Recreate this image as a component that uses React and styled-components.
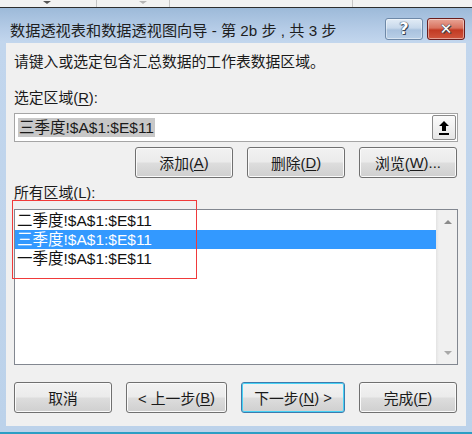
import React from 'react'
import styled, { createGlobalStyle } from 'styled-components'

const Global = createGlobalStyle`
  html, body {
    margin: 0;
    padding: 0;
    background: #f2f2f2;
  }
  body {
    width: 472px;
    height: 434px;
    overflow: hidden;
    font-family: "Liberation Sans", "Noto Sans CJK SC", sans-serif;
    color: #1a1a1a;
  }
`

const Sheet = styled.div`
  height: 7px;
  background: #f2f2f2;
  border-bottom: 1px solid #2e2e2e;
  position: relative;
  .grid {
    position: absolute;
    top: 0;
    width: 1px;
    height: 7px;
    background: #c6c6c6;
  }
  .tri {
    position: absolute;
    top: 1px;
    width: 0;
    height: 0;
    border-left: 4px solid transparent;
    border-right: 4px solid transparent;
    border-top: 3px solid #555;
  }
`

const Window = styled.div`
  height: 426px;
  background: linear-gradient(#9dbad9 0px, #b4cbe6 20px, #c2d6ed 34px, #bcd2ea 100%);
  display: flex;
  flex-direction: column;
  padding: 0 6px 0 6px;
  border-bottom: 2px solid #2c9ec4;
  box-sizing: border-box;
`

const TitleBar = styled.div`
  height: 35px;
  display: flex;
  align-items: center;
  padding: 0 1px 0 4px;
  box-sizing: border-box;
  h1 {
    flex: 1;
    margin: 0;
    font-weight: normal;
    font-size: 15.2px;
    line-height: 20px;
    margin-top: 10px;
    color: #1e1e1e;
  }
`

const Caption = styled.div`
  width: 38px;
  height: 22px;
  margin-top: 6px;
  margin-left: ${p => p.$gap || 0}px;
  box-sizing: border-box;
  border: 1px solid ${p => (p.$close ? '#6b1d1d' : '#6e89a8')};
  border-radius: 3px;
  background: ${p =>
    p.$close
      ? 'linear-gradient(#e8a597 0%, #d9725e 45%, #c23a23 55%, #d0563e 100%)'
      : 'linear-gradient(#e2ecf6 0%, #c7d8eb 45%, #a9c2de 55%, #b9cfe7 100%)'};
  box-shadow: inset 0 0 0 1px rgba(255, 255, 255, 0.45);
  display: flex;
  align-items: center;
  justify-content: center;
  color: #fff;
  font-family: "DejaVu Sans", sans-serif;
  font-weight: bold;
  font-size: ${p => (p.$close ? 15 : 16)}px;
  text-shadow: 0 0 1px #2a3446, 0 0 1px #2a3446, 1px 1px 0 #3b4658;
`

const Client = styled.div`
  flex: 1;
  background: #f0f0f0;
  padding: 9px 8px 12px 8px;
  display: flex;
  flex-direction: column;
  position: relative;
  margin-bottom: 6px;
`

const Label = styled.div`
  font-size: 14.8px;
  line-height: 20px;
  margin-top: ${p => p.$top || 0}px;
  white-space: nowrap;
  u {
    text-decoration: underline;
    text-underline-offset: 2px;
  }
`

const RangeInput = styled.div`
  margin-top: 5px;
  height: 29px;
  box-sizing: border-box;
  border: 1px solid #a5a5a5;
  background: #fff;
  display: flex;
  align-items: center;
  padding: 0 1px 0 3px;
  span {
    background: #c8c8c8;
    font-size: 15.5px;
    line-height: 19px;
    padding: 0 1px;
  }
`

const Collapse = styled.div`
  margin-left: auto;
  width: 24px;
  height: 25px;
  box-sizing: border-box;
  border: 1px solid #8a8a8a;
  border-radius: 2px;
  background: linear-gradient(#fbfbfb, #e6e6e6);
  display: flex;
  align-items: center;
  justify-content: center;
`

const ButtonRow = styled.div`
  display: flex;
  justify-content: ${p => p.$end ? 'flex-end' : 'space-between'};
  gap: 14px;
  margin-top: ${p => p.$top || 0}px;
  padding-right: 1px;
`

const Button = styled.div`
  width: ${p => p.$w || 98}px;
  height: 31px;
  box-sizing: border-box;
  border: 1px solid ${p => (p.$focus ? '#3d7bad' : '#707070')};
  border-radius: 3px;
  background: linear-gradient(#f2f2f2 0%, #ebebeb 48%, #dddddd 52%, #cfcfcf 100%);
  box-shadow: ${p => (p.$focus ? 'inset 0 0 0 1px #48d2f5' : 'inset 0 0 0 1px #fafafa')};
  display: flex;
  align-items: center;
  justify-content: center;
  font-size: 14.8px;
  white-space: nowrap;
  u {
    text-decoration: underline;
    text-underline-offset: 2px;
  }
`

const ListBox = styled.div`
  margin-top: 6px;
  height: 156px;
  box-sizing: border-box;
  border: 1px solid #828790;
  background: #fff;
  display: flex;
`

const Items = styled.div`
  flex: 1;
  padding-top: 1px;
`

const Item = styled.div`
  height: 19px;
  line-height: 19px;
  padding-left: 2px;
  font-size: 15.5px;
  background: ${p => (p.$selected ? '#3399ff' : 'transparent')};
  color: ${p => (p.$selected ? '#fff' : '#111')};
`

const ScrollBar = styled.div`
  width: 21px;
  background: linear-gradient(90deg, #e3e3e3 0px, #f0f0f0 3px, #f0f0f0 100%);
  display: flex;
  flex-direction: column;
  justify-content: space-between;
  align-items: center;
  padding: 10px 0 9px 2px;
  box-sizing: border-box;
`

const Arrow = styled.div`
  width: 0;
  height: 0;
  border-left: 4px solid transparent;
  border-right: 4px solid transparent;
  ${p => (p.$down ? 'border-top: 4px solid #a8a8a8;' : 'border-bottom: 4px solid #8a8a8a;')}
`

const Marker = styled.div`
  position: absolute;
  left: 6px;
  top: 157px;
  width: 183px;
  height: 77px;
  border: 1px solid #f03a3a;
  pointer-events: none;
`

const ranges = ['二季度!$A$1:$E$11', '三季度!$A$1:$E$11', '一季度!$A$1:$E$11']

export default function App() {
  return (
    <>
      <Global />
      <Sheet>
        <span className="tri" style={{ left: 43 }} />
        <span className="grid" style={{ left: 96 }} />
        <span className="tri" style={{ left: 139, borderTopColor: '#b5b5b5' }} />
        <span className="grid" style={{ left: 169 }} />
        <span className="grid" style={{ left: 352 }} />
      </Sheet>
      <Window>
        <TitleBar>
          <h1>数据透视表和数据透视图向导 - 第 2b 步 , 共 3 步</h1>
          <Caption>?</Caption>
          <Caption $close $gap={4}>✕</Caption>
        </TitleBar>
        <Client>
          <Label>请键入或选定包含汇总数据的工作表数据区域。</Label>
          <Label $top={16}>选定区域(<u>R</u>):</Label>
          <RangeInput>
            <span>三季度!$A$1:$E$11</span>
            <Collapse>
              <svg width="12" height="16" viewBox="0 0 12 16">
                <path d="M6 1 L11 6 L8 6 L8 11 L4 11 L4 6 L1 6 Z" fill="#000" />
                <rect x="1" y="13" width="10" height="2" fill="#000" />
              </svg>
            </Collapse>
          </RangeInput>
          <ButtonRow $end $top={5}>
            <Button>添加(<u>A</u>)</Button>
            <Button>删除(<u>D</u>)</Button>
            <Button>浏览(<u>W</u>)...</Button>
          </ButtonRow>
          <Label $top={5}>所有区域(<u>L</u>):</Label>
          <ListBox>
            <Items>
              {ranges.map((r, i) => (
                <Item key={r} $selected={i === 1}>{r}</Item>
              ))}
            </Items>
            <ScrollBar>
              <Arrow />
              <Arrow $down />
            </ScrollBar>
          </ListBox>
          <ButtonRow $top={17}>
            <Button>取消</Button>
            <Button $w={101}>&lt; 上一步(<u>B</u>)</Button>
            <Button $w={104} $focus>下一步(<u>N</u>) &gt;</Button>
            <Button>完成(<u>F</u>)</Button>
          </ButtonRow>
          <Marker />
        </Client>
      </Window>
    </>
  )
}
